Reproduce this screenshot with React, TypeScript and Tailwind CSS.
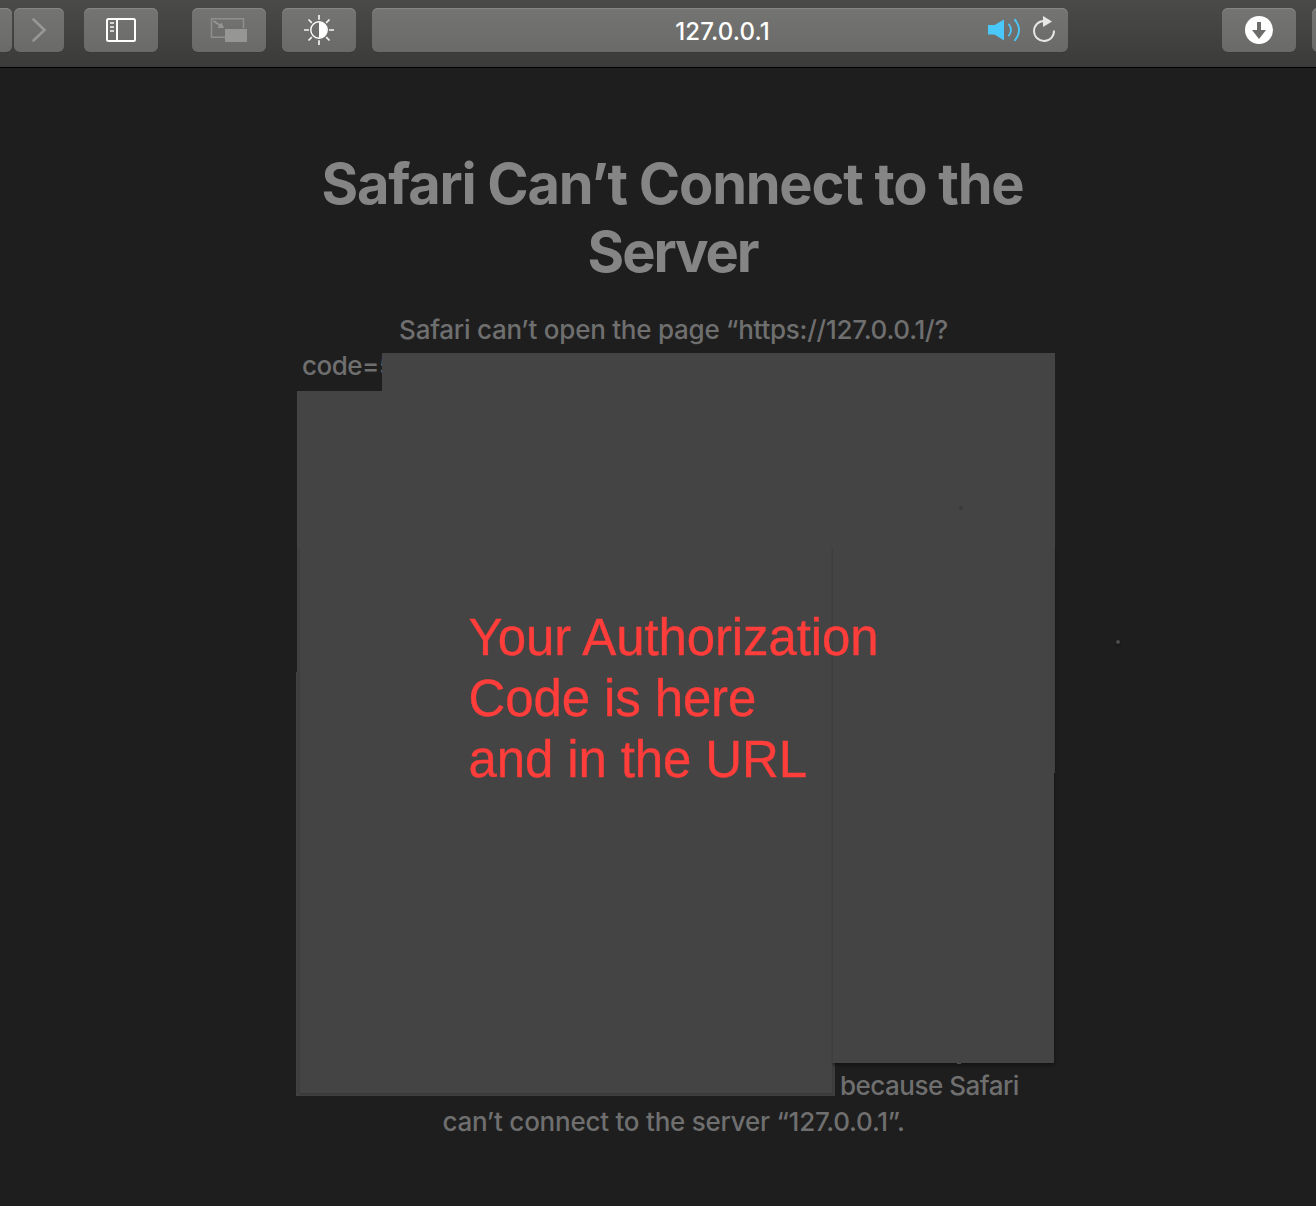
import type { ReactNode } from "react";

function ToolButton({ className, children }: { className: string; children?: ReactNode }) {
  return (
    <div
      className={`flex h-11 shrink-0 items-center justify-center bg-linear-to-b from-[#747472] to-[#6a6a68] shadow-[inset_0_1px_0_#868684,0_1px_0_#3a3a38] ${className}`}
    >
      {children}
    </div>
  );
}

function ForwardIcon() {
  return (
    <svg width="50" height="44" viewBox="0 0 50 44" fill="none">
      <path d="M19.500 11.500 30.500 22 19.500 32.500" stroke="#979795" strokeWidth="2.600" strokeLinecap="round" />
    </svg>
  );
}

function SidebarIcon() {
  return (
    <svg width="74" height="44" viewBox="0 0 74 44" fill="none">
      <rect x="23" y="11" width="28" height="22" rx="1.500" stroke="#fff" strokeWidth="2" />
      <path d="M33 11V33" stroke="#fff" strokeWidth="2" />
      <path d="M26 15H30M26 19H30M26 23H30" stroke="#d4d4d3" strokeWidth="2" />
    </svg>
  );
}

function PictureIcon() {
  return (
    <svg width="74" height="44" viewBox="0 0 74 44" fill="none">
      <path d="M33 29.200H19.500V10.700H51.500V20" stroke="#8f8f8d" strokeWidth="1.500" />
      <path d="M21.500 13 28.500 17.500" stroke="#969694" strokeWidth="2" />
      <path d="M32 20 25.500 19.700 29.500 14.500Z" fill="#969694" />
      <rect x="33" y="21" width="22" height="13" fill="#969694" />
    </svg>
  );
}

function BrightnessIcon() {
  return (
    <svg width="74" height="44" viewBox="0 0 74 44" fill="none">
      <circle cx="37" cy="22" r="8.200" stroke="#fff" strokeWidth="1.400" />
      <path d="M37 14A8 8 0 0 1 37 30Z" fill="#fff" />
      <path
        d="M37 7V11.800M37 32.200V37M22 22H27M47 22H52M26.500 11.500 29.800 14.800M44.200 29.200 47.500 32.500M26.500 32.500 29.800 29.200M44.200 14.800 47.500 11.500"
        stroke="#f4f4f4"
        strokeWidth="1.700"
      />
    </svg>
  );
}

function SpeakerIcon() {
  return (
    <svg width="36" height="44" viewBox="0 0 36 44" fill="none">
      <path d="M1 17H7.500L17 11.500V32.500L7.500 26.500H1Z" fill="#4ac8fa" />
      <path d="M21.500 15.800Q26.500 22 21.500 28.200M27.500 11.200Q36.500 22 27.500 32.800" stroke="#4ac8fa" strokeWidth="1.800" />
    </svg>
  );
}

function ReloadIcon() {
  return (
    <svg width="26" height="44" viewBox="0 0 26 44" fill="none">
      <path d="M12 13A10 10 0 1 0 22 22.500" stroke="#e7e7e6" strokeWidth="1.900" />
      <path d="M11 8 20 13.500 11 19Z" fill="#e7e7e6" />
    </svg>
  );
}

function DownloadIcon() {
  return (
    <svg width="74" height="44" viewBox="0 0 74 44" fill="none">
      <circle cx="37" cy="22" r="14" fill="#fff" />
      <path d="M35 14H39V22H44L37 31 30 22H35Z" fill="#6c6c6a" />
    </svg>
  );
}

function Toolbar() {
  return (
    <header className="flex h-[68px] items-start overflow-hidden border-b border-black bg-linear-to-b from-[#4a4a48] to-[#3b3b39] pt-2">
      <ToolButton className="w-3 rounded-r-md" />
      <ToolButton className="ml-0.5 w-[50px] rounded-md">
        <ForwardIcon />
      </ToolButton>
      <ToolButton className="ml-5 w-[74px] rounded-md">
        <SidebarIcon />
      </ToolButton>
      <ToolButton className="ml-[34px] w-[74px] rounded-md">
        <PictureIcon />
      </ToolButton>
      <ToolButton className="ml-4 w-[74px] rounded-md">
        <BrightnessIcon />
      </ToolButton>
      <div className="ml-4 grid h-11 w-[696px] shrink-0 grid-cols-[1fr_auto_1fr] items-center rounded-md bg-linear-to-b from-[#747472] to-[#6a6a68] shadow-[inset_0_1px_0_#868684,0_1px_0_#3a3a38]">
        <span />
        <span className="pt-[3px] pl-[5px] text-[24px] leading-8 font-medium tracking-[0.1px] text-white">127.0.0.1</span>
        <span className="flex justify-end pr-[10px]">
          <SpeakerIcon />
          <span className="ml-[9px] flex">
            <ReloadIcon />
          </span>
        </span>
      </div>
      <ToolButton className="ml-[154px] w-[74px] rounded-md">
        <DownloadIcon />
      </ToolButton>
      <ToolButton className="ml-4 w-[74px] rounded-md" />
    </header>
  );
}

/* Opaque patches laid over the page text, with the note on top. */
function Redaction() {
  return (
    <div className="absolute inset-x-0 top-[41px] h-[743px]">
      <div className="absolute top-0 left-[86px] h-[100px] w-[673px] bg-[#444444]" />
      <div className="absolute top-[38px] left-px h-[382px] w-[758px] bg-[#444444]" />
      <div className="absolute top-[319px] left-0 h-[424px] w-[539px] bg-[#414141]" />
      <div className="absolute top-[195px] left-[537px] h-[515px] w-[221px] bg-[#444444] shadow-[0_2px_3px_#141414]" />
      <div className="absolute top-[195px] left-[4px] h-[545px] w-[532px] bg-[#444444] shadow-[0_1px_3px_#353535]" />
      <div className="absolute top-[195px] left-[537px] h-[515px] w-[221px] bg-[#444444]" />
      <div className="absolute top-[195px] left-[535px] h-[515px] w-0.5 bg-linear-to-r from-[#414141] to-[#3e3e3e]" />
      <div className="absolute top-[38px] left-px h-[156px] w-[758px] bg-[#444444]" />
      <div className="absolute top-[194px] left-px h-px w-[757px] bg-[#444444]" />
      <div className="absolute top-[194px] left-[758px] h-[226px] w-px bg-[#404040]" />
      <div className="absolute top-[710px] left-[661px] h-px w-1 bg-[#4c4c4c]" />
      <div className="absolute top-[153px] left-[663px] size-1 rounded-full bg-[#3a3a3a]" />
      <div className="absolute top-[287px] left-[820px] size-1 rounded-full bg-[#4c4c4c] shadow-[0_1px_2px_#111]" />
      <p className="absolute top-[254px] left-[172.5px] font-['Liberation_Sans',Arial,sans-serif] text-[51px] leading-[61px] tracking-[-0.12px] whitespace-nowrap text-[#ff3d3a] [-webkit-text-stroke:0.4px_#ff3d3a]">
        Your Authorization
        <br />
        Code is here
        <br />
        and in the URL
      </p>
    </div>
  );
}

export default function App() {
  return (
    <div className="flex h-[1206px] flex-col overflow-hidden bg-[#1e1e1e] font-[Inter,sans-serif]">
      <Toolbar />
      <main className="ml-[296px] w-[759px] pt-[82px]">
        <h1 className="pr-[6px] text-center text-[56px] leading-[68px] font-bold tracking-[-1.24px] text-[#858585]">
          Safari Can’t Connect to the
          <br />
          <span className="tracking-[-2.1px]">Server</span>
        </h1>
        <section className="relative mt-[26px] text-[26px] leading-9 font-[450] text-[#6f6f6f]">
          <p className="pr-[4px] text-center tracking-[-0.25px]">Safari can’t open the page “https://127.0.0.1/?</p>
          <p className="pl-1.5 tracking-[-0.5px]">code=5</p>
          <p className="mt-[684px] pl-[544px] tracking-[-0.5px]">because Safari</p>
          <p className="pr-[4px] text-center tracking-[-0.24px]">can’t connect to the server “127.0.0.1”.</p>
          <Redaction />
        </section>
      </main>
    </div>
  );
}
